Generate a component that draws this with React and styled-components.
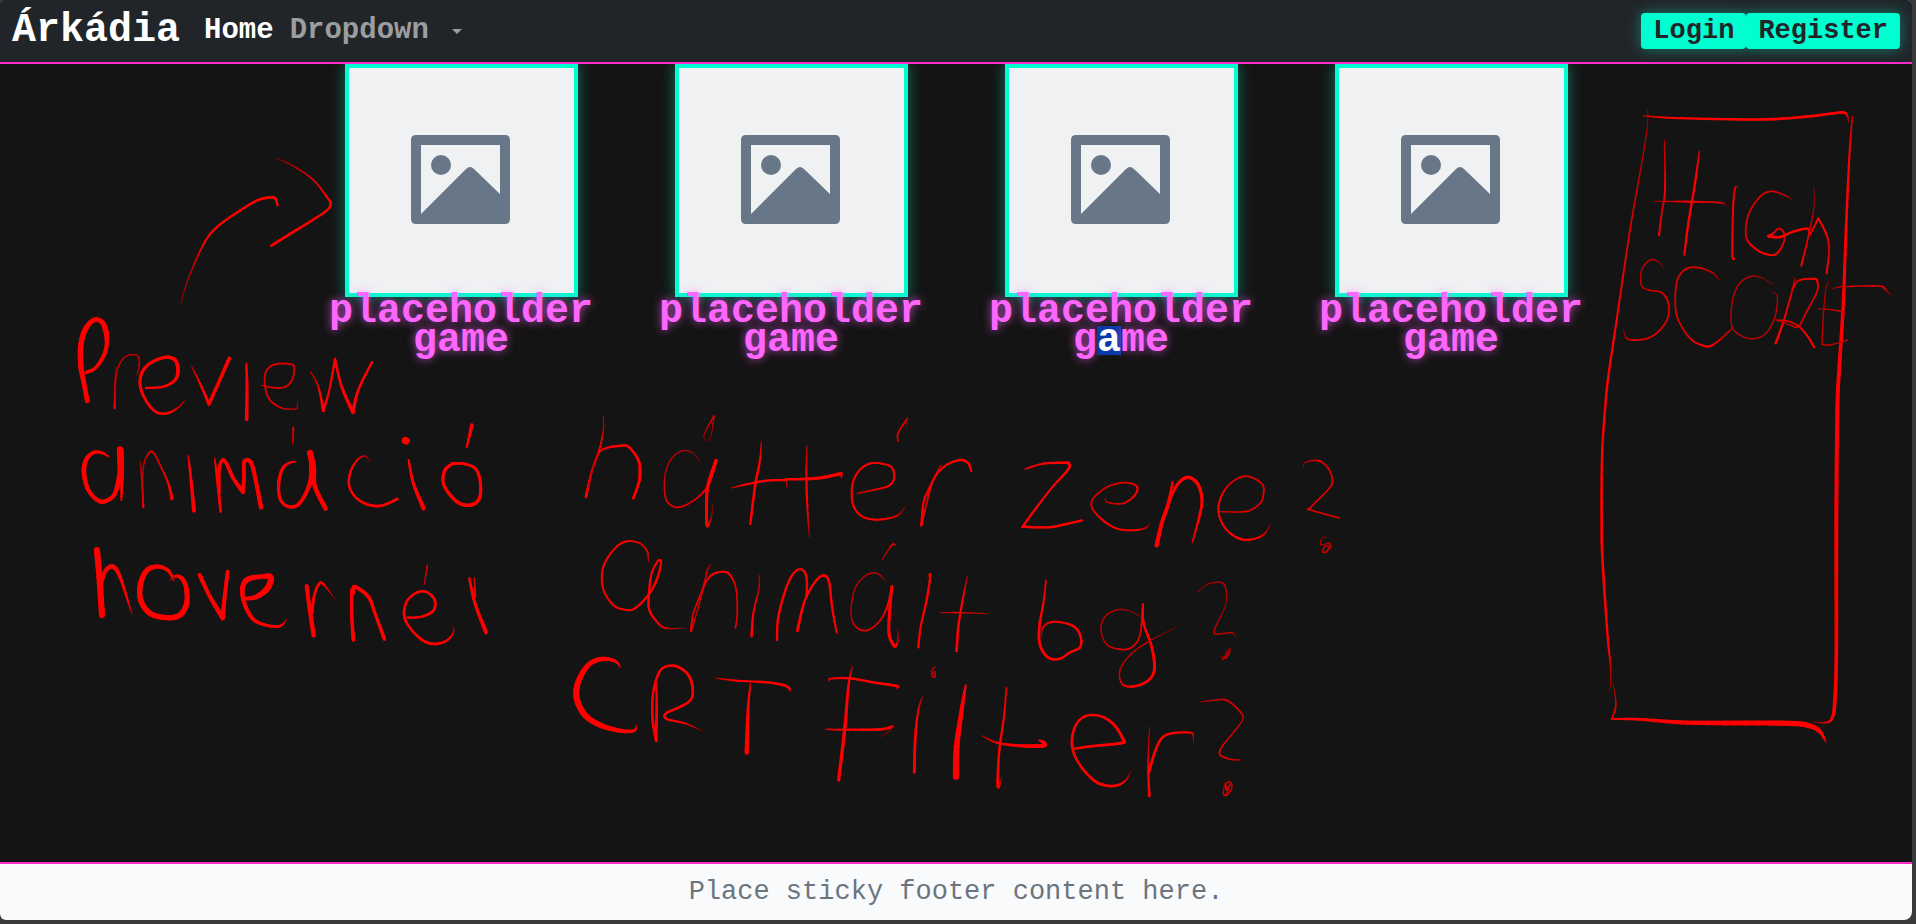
import React from "react";
import styled, { createGlobalStyle } from "styled-components";

const GlobalStyle = createGlobalStyle`
  * { box-sizing: border-box; }
  body {
    margin: 0;
    background: #3a3a3a;
    font-family: "Liberation Mono", "DejaVu Sans Mono", monospace;
  }
`;

const Desktop = styled.div`
  position: relative;
  min-height: 100vh;
  padding: 0 4px 4px 0;
  display: flex;
`;

const Page = styled.div`
  flex: 1;
  min-width: 0;
  display: flex;
  flex-direction: column;
  background: #141414;
  border-radius: 6px 8px 8px 6px;
  overflow: hidden;
`;

const Navbar = styled.nav`
  position: relative;
  z-index: 1;
  display: flex;
  align-items: center;
  height: 64px;
  padding: 0 12px;
  background: #212529;
  border-bottom: 2px solid #ff2bc8;
`;

const Brand = styled.a`
  margin-right: 16px;
  color: #fff;
  font-size: 40px;
  font-weight: 700;
  line-height: 48px;
  text-decoration: none;
`;

const NavList = styled.ul`
  display: flex;
  flex: 1;
  margin: 0;
  padding: 0;
  list-style: none;
`;

const NavLink = styled.a`
  display: block;
  padding: 0 8px;
  color: #fff;
  font-size: 29px;
  font-weight: 700;
  line-height: 40px;
  text-decoration: none;
`;

const NavToggle = styled.button`
  display: flex;
  align-items: center;
  gap: 23px;
  padding: 0 8px;
  border: 0;
  background: none;
  color: #9b9d9e;
  font: inherit;
  font-size: 29px;
  font-weight: 700;
  line-height: 40px;
`;

const Caret = styled.span`
  border: 5px solid transparent;
  border-top-color: currentColor;
  border-bottom: 0;
`;

const Actions = styled.div`
  display: flex;
`;

const NeonButton = styled.button`
  height: 36px;
  padding: 0 12px;
  border: 0;
  border-radius: 4px;
  background: #00ffd0;
  box-shadow: 0 0 14px rgba(0, 255, 208, 0.4);
  color: #212529;
  font: inherit;
  font-size: 27px;
  font-weight: 700;
  line-height: 36px;
`;

const Main = styled.main`
  flex: 1;
`;

const Games = styled.div`
  display: grid;
  grid-template-columns: repeat(4, 1fr);
  max-width: 1320px;
  margin: 0 auto;
`;

const Game = styled.article`
  display: flex;
  flex-direction: column;
  align-items: center;
  padding: 0 12px;
`;

const Thumb = styled.svg`
  display: block;
  width: 233px;
  height: 233px;
  border: 4px solid #00ffd0;
  background: #eff1f3;
  box-shadow: 0 0 14px rgba(0, 255, 208, 0.4);
`;

const GameTitle = styled.h2`
  margin: 0;
  color: #ff66ff;
  font-size: 40px;
  font-weight: 700;
  line-height: 29px;
  text-align: center;
  text-shadow: 0 0 10px rgba(255, 102, 255, 0.7);
`;

const Unbroken = styled.span`
  white-space: nowrap;
`;

const Selected = styled.mark`
  display: inline-block;
  height: 29px;
  background: #0a3aa8;
  color: #fff;
  text-shadow: none;
  vertical-align: top;
`;

const Footer = styled.footer`
  display: flex;
  align-items: center;
  justify-content: center;
  height: 58px;
  border-top: 2px solid #ff2bc8;
  background: #f8fafc;
  color: #6c757d;
  font-size: 27px;
  line-height: 32px;
  white-space: nowrap;
`;

const Ink = styled.svg`
  position: absolute;
  z-index: 2;
  top: 0;
  left: 0;
  width: 100%;
  pointer-events: none;
  stroke-linecap: round;
`;

// Pen strokes: "x,y,width" points in thirds of a pixel, measured from each note's origin.
const NOTES = [
  {
    x: 60,
    y: 140,
    strokes: [
      "364,492,2 372,455,3 395,390,4 435,305,6 470,262,7 530,218,7 590,182,7 630,172,8 646,176,8 653,197,6",
      "650,55,2 700,78,4 760,120,5 800,170,6 812,190,7 800,212,7 750,245,7 690,282,8 634,317,8",
      "82,783,14 70,720,14 63,680,16 62,620,16 75,570,16 100,541,14 125,545,14 138,575,16 140,615,12 130,650,12 105,685,10 78,697,10",
      "168,680,2 165,740,5 164,805,6 164,805,6 166,740,4 172,690,4 190,655,4 215,644,4 235,650,4 237,680,4 230,705,3",
      "258,744,7 310,740,7 345,720,9 354,690,11 345,660,11 315,652,10 270,670,9 245,700,9 241,740,9 260,785,8 290,817,8 325,819,7 355,802,5 374,782,3",
      "395,679,3 420,730,6 447,792,10 447,792,10 475,730,10 508,655,11",
      "559,670,5 561,740,9 560,838,11",
      "606,736,4 640,743,5 675,741,5 695,722,5 703,690,5 697,674,5 660,671,5 630,680,5 615,705,5 616,745,5 630,780,5 660,802,5 690,808,4 711,804,4 712,785,2",
      "751,694,3 775,740,5 790,812,9 790,812,9 808,750,6 825,657,7 825,657,7 845,740,8 879,817,11 879,817,11 895,750,8 936,666,7",
      "146,950,4 125,938,8 100,938,10 78,960,13 72,1000,14 85,1050,12 115,1082,12 140,1082,12 165,1060,12 180,1000,16 181,960,18 180,928,19",
      "182,930,18 186,1000,12 184,1080,6",
      "240,962,2 245,1010,5 250,1102,6 250,1102,6 248,1030,4 252,970,4 268,938,5 282,940,5 305,985,5 325,1030,6 336,1076,10 336,1076,8 328,1060,3",
      "385,947,4 392,1010,8 402,1112,12",
      "464,955,4 472,1020,8 482,1115,8",
      "478,1060,8 478,990,9 486,962,10 498,968,10 520,1015,11 549,1056,12 549,1056,12 552,1010,11 553,965,11 572,966,12 585,1010,12 603,1102,13",
      "708,965,4 690,968,6 668,985,9 656,1030,10 660,1075,9 680,1098,9 710,1097,10 735,1065,11 752,1020,13 755,970,16 750,938,17 750,938,17 760,980,16 765,1040,13 797,1106,13",
      "700,863,6 698,912,4",
      "932,963,2 912,948,4 888,965,6 870,1000,7 868,1040,7 890,1075,7 925,1094,8 965,1097,8 1012,1077,8",
      "1046,960,6 1060,1030,9 1091,1105,12",
      "1035,901,20 1039,903,20",
      "1180,970,8 1155,990,10 1150,1030,9 1175,1070,10 1205,1093,10 1240,1093,11 1260,1070,10 1260,1020,9 1245,985,9 1210,971,8 1175,971,8",
      "1236,855,12 1220,922,6",
      "111,1230,18 118,1310,18 126,1425,18",
      "122,1340,10 135,1295,12 158,1280,14 180,1310,11 215,1420,4",
      "342,1322,3 325,1292,10 295,1280,12 262,1290,15 242,1330,16 242,1380,16 270,1420,16 320,1433,16 360,1425,16 380,1390,16 378,1340,14 362,1312,12 340,1310,6 328,1325,2",
      "419,1305,12 450,1370,12 488,1434,14 488,1434,14 494,1370,12 503,1295,11",
      "558,1376,10 590,1370,14 622,1345,18 632,1312,18 600,1310,13 560,1320,16 547,1350,14 555,1395,12 580,1438,11 620,1456,9 660,1458,8 680,1438,3",
      "740,1338,12 748,1400,12 761,1486,13",
      "756,1420,9 762,1370,8 775,1335,8 790,1332,7 828,1382,2",
      "875,1350,10 875,1420,10 880,1500,11",
      "880,1360,10 884,1340,11 925,1370,11 945,1420,9 973,1497,11",
      "1042,1433,7 1085,1430,7 1120,1412,8 1124,1380,8 1100,1356,7 1070,1358,7 1040,1385,7 1033,1430,8 1055,1470,7 1090,1502,8 1125,1512,8 1160,1502,7 1180,1478,5 1178,1460,2",
      "1102,1276,5 1093,1333,4",
      "1228,1315,7 1245,1390,9 1278,1477,12",
      "1243,1313,4 1246,1370,6",
    ],
  },
  {
    x: 560,
    y: 400,
    strokes: [
      "130,48,3 130,90,4 118,150,6 95,215,6 78,290,8 78,290,8 90,240,4 100,200,4 115,160,5 140,144,6 175,138,7 205,140,7 235,180,8 240,220,9 236,250,8 220,295,8",
      "420,187,2 400,160,3 370,152,4 335,175,4 315,225,4 316,290,5 335,317,5 365,320,5 410,295,5 445,255,6 468,182,10 468,182,10 445,250,9 440,300,9 441,376,9 453,355,4 460,310,2",
      "440,123,2 432,105,3 462,48,5 462,48,5 455,100,3 446,122,2",
      "604,125,3 600,180,6 585,260,8 571,372,7",
      "514,264,3 560,253,6 620,242,7 680,240,7 680,240,5 680,262,3",
      "680,238,6 770,235,9 843,221,10 843,221,8 845,233,4",
      "741,137,3 739,200,5 741,300,7 748,412,3",
      "892,280,4 940,270,5 985,258,6 1002,235,6 995,202,6 960,190,6 925,192,6 895,215,6 877,255,6 878,310,6 900,345,6 935,358,6 975,357,6 1015,345,5 1037,317,2",
      "1015,124,4 1014,100,5 1042,55,5 1042,55,4 1040,80,2",
      "1146,190,2 1130,220,5 1105,270,6 1090,310,6 1084,376,7 1084,376,7 1100,310,5 1120,240,6 1155,198,6 1200,180,7 1225,190,7 1234,214,6",
      "265,485,3 262,455,5 240,430,5 200,424,6 165,445,6 130,500,6 129,565,6 160,615,6 195,629,6 225,625,6 265,585,7 290,540,7 303,490,6 295,482,6 275,520,6 267,580,7 268,630,7 295,670,6 320,685,5 372,684,2",
      "455,492,2 442,510,4 430,560,5 400,640,5 393,694,6 393,694,6 410,640,4 432,560,5 455,525,6 490,515,6 510,525,6 528,565,5 532,640,5 526,684,5",
      "597,525,3 597,565,4 580,640,6 575,708,8",
      "651,720,7 655,650,7 680,560,7 705,515,6 728,510,6 740,535,7 740,590,7",
      "712,692,9 735,600,7 770,540,7 795,527,7 808,550,7 816,620,7 830,698,6",
      "978,545,2 955,522,4 925,522,4 890,555,4 875,610,4 876,660,4 898,688,5 930,688,5 965,655,5 985,610,6 996,560,8 996,560,8 990,620,9 987,700,9 1003,738,9 1013,725,5 1014,690,2",
      "966,480,3 985,450,4 998,433,5 1006,435,4",
      "1103,532,2 1111,525,6 1100,600,7 1082,680,6 1075,742,7",
      "1222,530,3 1208,600,6 1195,680,7 1190,753,8",
      "1143,638,3 1200,638,5 1282,641,3",
      "182,803,2 165,783,8 125,777,13 85,795,14 55,845,17 50,895,18 75,945,18 120,975,16 180,992,13 222,992,9 230,972,2",
      "289,1022,9 278,960,8 278,890,7 290,835,7 310,803,7 350,799,8 385,825,8 398,865,8 392,900,7 355,923,7 318,940,7 320,957,7 375,970,6 428,993,2",
      "288,1020,9 290,930,8 289,840,5",
      "467,834,3 530,842,6 620,847,7 670,855,7 688,865,7 690,875,3",
      "571,852,4 564,930,8 560,1058,13",
      "877,800,3 865,860,7 855,980,10 836,1140,10",
      "808,842,3 812,836,5 870,835,7 940,847,7 1010,858,8 1010,864,4",
      "798,988,4 850,989,6 960,988,8 998,979,7 998,979,5 985,995,3 962,1011,2",
      "1087,892,3 1075,930,5 1066,1010,8 1063,1117,9",
      "1127,800,3 1115,812,4 1118,830,4 1126,830,4 1124,815,4 1118,822,4",
      "1217,856,5 1205,930,12 1190,1040,17 1188,1130,19",
    ],
  },
  {
    x: 960,
    y: 400,
    strokes: [
      "196,207,5 250,191,6 325,188,8 325,188,8 325,208,8 270,270,6 195,370,7 197,380,7 265,382,7 310,374,7 366,361,7",
      "435,296,3 445,308,4 490,310,5 525,285,6 530,258,6 490,248,5 440,262,5 400,295,5 397,325,5 430,362,6 475,387,6 530,390,6 560,382,4 569,370,2",
      "638,245,5 625,310,10 605,370,11 590,436,13",
      "615,345,8 640,275,8 665,240,9 690,233,10 715,255,10 726,300,9 718,350,8 697,427,5",
      "778,335,4 860,334,5 900,310,5 910,285,5 908,255,5 875,232,5 840,232,5 800,262,5 777,310,6 780,355,6 805,395,6 845,418,7 885,416,6 915,400,5 933,370,2",
      "1031,203,2 1035,188,3 1075,182,5 1105,205,5 1117,240,5 1108,265,5 1052,322,5 1052,330,5 1138,354,5",
      "1100,412,2 1085,415,3 1083,435,3 1110,430,4 1100,455,4 1088,455,4 1095,440,4 1116,438,3 1098,457,4",
      "258,541,5 250,610,6 238,680,8 240,735,8 265,773,8 300,776,7 330,757,7 360,742,7 362,710,7 345,682,7 310,668,6 270,667,6 248,685,5 243,715,3",
      "543,650,3 505,632,3 470,630,4 435,650,4 423,690,4 440,733,4 480,748,5 515,742,5 540,705,5 549,613,6 549,613,6 551,670,7 575,740,8 583,810,9 560,845,8 515,860,7 485,850,5 480,810,4 510,765,4 565,725,4 648,682,2",
      "711,578,3 745,552,3 785,548,4 798,570,4 797,615,3 765,685,4 768,702,4 815,698,4 827,710,2",
      "787,768,3 790,777,4 810,748,3 805,765,4 795,775,4 800,755,3 812,745,2",
      "139,863,5 132,950,6 118,1050,7 113,1150,8 118,1158,6 125,1130,2",
      "64,1006,2 110,1028,6 180,1037,9 250,1037,12 250,1027,10 237,1021,5",
      "343,1046,7 400,1038,8 485,1029,9 488,1015,9 460,972,8 420,948,7 375,949,7 345,980,7 336,1035,8 355,1088,7 400,1140,8 440,1157,8 475,1155,7 500,1138,5 511,1113,2",
      "569,981,3 565,1050,4 565,1120,6 568,1188,8",
      "566,1120,7 585,1055,8 605,1015,7 635,1000,7 692,998,6 700,1010,4 700,1028,2",
      "722,906,3 760,901,4 800,901,5 840,935,5 845,965,4 780,1050,5 800,1075,5 840,1080,4",
      "795,1150,3 790,1180,4 800,1185,5 815,1165,4 812,1147,4 798,1150,4 800,1170,5 810,1155,4 800,1182,4",
    ],
  },
  {
    x: 1580,
    y: 90,
    strokes: [
      "203,58,2 202,110,3 185,220,4 150,420,5 110,690,6 85,860,7 75,960,7 66,1100,7 65,1300,8 68,1420,8 83,1640,7 91,1720,5 92,1780,3 87,1802,2",
      "98,1775,2 107,1830,4 105,1860,5 95,1887,5 95,1887,5 180,1888,8 300,1897,12 430,1899,14 630,1900,16 690,1908,15 720,1925,12 738,1956,4",
      "817,80,4 808,200,6 798,420,8 790,640,10 778,830,11 772,960,12 769,1300,12 769,1700,11 764,1840,11 758,1880,9 742,1897,6 695,1896,2",
      "190,77,3 260,83,6 400,87,7 560,88,8 680,80,8 760,70,8 792,68,8 803,80,5 806,98,2",
      "253,150,3 255,300,6 245,370,5 237,436,6",
      "358,184,4 345,280,7 325,400,7 313,494,6",
      "222,334,2 330,335,6 420,338,5 435,345,3",
      "474,292,2 465,296,5 459,360,6 457,490,6 462,507,6",
      "636,329,2 615,316,4 575,304,5 540,320,5 505,375,5 498,440,5 525,475,6 560,493,6 590,491,6 612,455,5 610,425,5 595,416,5 580,430,5 565,439,8 565,439,8 600,441,8 640,425,7 683,416,7 686,435,4",
      "701,290,2 702,350,3 685,440,5 664,527,6",
      "690,435,5 715,385,6 715,385,6 740,435,6 747,480,5 740,550,6",
      "250,534,2 235,515,3 210,510,4 185,540,4 184,585,4 205,600,4 245,608,5 265,640,5 263,685,5 235,725,5 200,746,5 155,750,5 138,742,4 130,718,2",
      "417,570,2 400,550,4 360,534,5 320,536,5 292,570,5 286,640,5 295,690,5 330,745,5 370,767,6 400,764,6 455,717,4",
      "577,583,2 545,563,3 510,560,4 475,585,4 456,640,4 456,710,4 485,738,4 520,746,4 555,733,4 582,690,4 592,640,4 590,615,3 578,606,2",
      "644,563,2 637,600,5 612,690,6 587,760,7",
      "637,600,5 655,572,5 700,566,6 712,575,6 711,605,5 680,665,5 655,710,5 630,705,4 590,690,4 590,690,4 625,694,5 655,708,5 680,735,6 703,772,6",
      "747,574,2 737,600,3 730,680,4 726,763,4 726,763,4 750,765,4 803,750,4",
      "714,656,3 760,660,4 790,667,5 793,678,2",
      "756,596,2 790,590,4 895,588,5 915,597,5 932,617,2",
    ],
  },
];

const STEPS = 6;

// Smooths the points with a Catmull-Rom curve; a repeated point makes a sharp corner.
function traceStroke(text) {
  const pts = text.split(" ").map((p) => p.split(",").map(Number));
  const out = [pts[0]];
  for (let i = 0; i < pts.length - 1; i++) {
    const b = pts[i];
    const c = pts[i + 1];
    if (b[0] === c[0] && b[1] === c[1]) continue;
    const a = pts[i - 1] || b;
    const d = pts[i + 2] || c;
    for (let s = 1; s <= STEPS; s++) {
      const t = s / STEPS;
      const curve = (k) =>
        0.5 *
        (2 * b[k] +
          (c[k] - a[k]) * t +
          (2 * a[k] - 5 * b[k] + 4 * c[k] - d[k]) * t * t +
          (3 * b[k] - a[k] - 3 * c[k] + d[k]) * t * t * t);
      out.push([curve(0), curve(1), b[2] + (c[2] - b[2]) * t]);
    }
  }
  return out;
}

// Light pen pressure gives a thinner and darker line.
const inkColor = (width) => `rgb(${Math.min(255, Math.round(90 + width * 26))}, 0, 0)`;

function PenStroke({ points }) {
  const trail = traceStroke(points);
  return trail.slice(1).map((p, i) => (
    <line
      key={i}
      x1={trail[i][0]}
      y1={trail[i][1]}
      x2={p[0]}
      y2={p[1]}
      stroke={inkColor(p[2])}
      strokeWidth={p[2]}
    />
  ));
}

function Annotations() {
  return (
    <Ink
      viewBox="0 0 1916 924"
      role="img"
      aria-label="Preview animáció hovernél. Háttér zene? Animált bg? CRT Filter? High score"
    >
      {NOTES.map((note) => (
        <g key={`${note.x}-${note.y}`} transform={`translate(${note.x} ${note.y}) scale(${1 / 3})`}>
          {note.strokes.map((s) => (
            <PenStroke key={s} points={s} />
          ))}
        </g>
      ))}
    </Ink>
  );
}

function GameCard({ children }) {
  return (
    <Game>
      <Thumb viewBox="0 0 225 225" role="img" aria-label="Placeholder image">
        <path
          fill="#687787"
          fillRule="evenodd"
          d="M67 67h89q5 0 5 5v79q0 5-5 5H67q-5 0-5-5V72q0-5 5-5zM72 77v69l45-45q4-4 8 0l26 25V77z"
        />
        <circle cx="92" cy="97" r="10" fill="#687787" />
      </Thumb>
      <GameTitle>{children}</GameTitle>
    </Game>
  );
}

export default function App() {
  return (
    <Desktop>
      <GlobalStyle />
      <Page>
        <Navbar>
          <Brand href="#">Árkádia</Brand>
          <NavList>
            <li>
              <NavLink href="#">Home</NavLink>
            </li>
            <li>
              <NavToggle type="button" aria-haspopup="true">
                Dropdown
                <Caret />
              </NavToggle>
            </li>
          </NavList>
          <Actions>
            <NeonButton type="button">Login</NeonButton>
            <NeonButton type="button">Register</NeonButton>
          </Actions>
        </Navbar>
        <Main>
          <Games>
            <GameCard>placeholder game</GameCard>
            <GameCard>placeholder game</GameCard>
            <GameCard>
              placeholder{" "}
              <Unbroken>
                g<Selected>a</Selected>me
              </Unbroken>
            </GameCard>
            <GameCard>placeholder game</GameCard>
          </Games>
        </Main>
        <Footer>Place sticky footer content here.</Footer>
      </Page>
      <Annotations />
    </Desktop>
  );
}
